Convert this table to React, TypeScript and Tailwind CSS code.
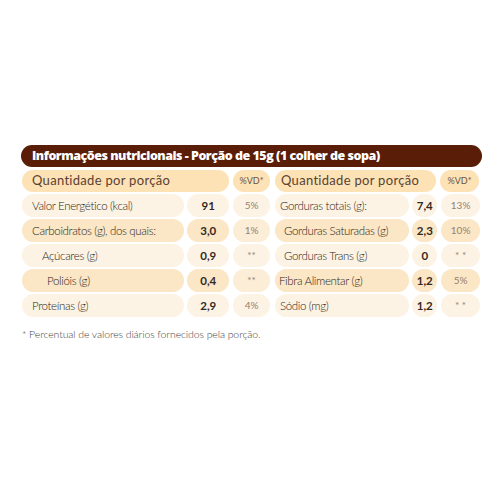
type Row = {
  label: string
  value: string
  vd: string
  dark?: boolean
  indent?: string
}

const left: Row[] = [
  { label: 'Valor Energético (kcal)', value: '91', vd: '5%' },
  { label: 'Carboidratos (g), dos quais:', value: '3,0', vd: '1%', dark: true },
  { label: 'Açúcares (g)', value: '0,9', vd: '**', indent: 'pl-[20px]' },
  { label: 'Polióis (g)', value: '0,4', vd: '**', dark: true, indent: 'pl-[25px]' },
  { label: 'Proteínas (g)', value: '2,9', vd: '4%' },
]

const right: Row[] = [
  { label: 'Gorduras totais (g):', value: '7,4', vd: '13%', indent: 'pl-[5px]' },
  { label: 'Gorduras Saturadas (g)', value: '2,3', vd: '10%', dark: true, indent: 'pl-[9px]' },
  { label: 'Gorduras Trans (g)', value: '0', vd: '* *', indent: 'pl-[9px]' },
  { label: 'Fibra Alimentar (g)', value: '1,2', vd: '5%', dark: true, indent: 'pl-[4px]' },
  { label: 'Sódio (mg)', value: '1,2', vd: '* *', indent: 'pl-[5px]' },
]

const font = { fontFamily: 'Lato, "Noto Sans", sans-serif' }

function Cells({ row, labelW, valueW, vdW, leftSide }: { row: Row; labelW: string; valueW: string; vdW: string; leftSide: boolean }) {
  const bg = row.dark ? 'bg-[#fbe6c5]' : 'bg-[#fdf3e4]'
  const vdBg = row.dark ? (leftSide ? 'bg-[#fcedd6]' : 'bg-[#fbe6c5]') : 'bg-[#fdf3e4]'
  return (
    <>
      <div className={`${labelW} ${bg} ${row.indent ?? 'pl-[10px]'} flex h-[23px] items-center rounded-full text-[11.5px] font-light tracking-[-0.35px] text-[#2a1f18]`}>
        {row.label}
      </div>
      <div className={`${valueW} ${bg} flex h-[23px] items-center justify-center rounded-full text-[11.5px] font-bold text-[#34281f]`}>
        {row.value}
      </div>
      <div className={`${vdW} ${vdBg} flex h-[23px] items-center justify-center rounded-full text-[10px] text-[#948171]`}>
        {row.vd}
      </div>
    </>
  )
}

export default function App() {
  return (
    <div className="h-[500px] w-[500px] bg-white pl-[21px] pt-[145px]" style={font}>
      <div className="flex w-[461px] flex-col">
        <div className="flex h-[22px] items-center rounded-full bg-[#5a1d08] pl-[11px]">
          <span
            className="text-[12.5px] font-extrabold tracking-[-0.5px] text-white"
            style={{ fontFamily: '"Open Sans", Lato, sans-serif' }}
          >
            Informações nutricionais - Porção de 15g (1 colher de sopa)
          </span>
        </div>

        <div className="mt-[3px] flex gap-[5px] pl-[1px]">
          <div className="flex w-[248px] flex-col gap-[2px]">
            <div className="flex gap-[4px]">
              <div className="flex h-[22px] w-[207px] items-center rounded-full bg-[#fde2b6] pl-[10px] text-[13px] tracking-[0.3px] text-[#5a4131]">
                Quantidade por porção
              </div>
              <div className="flex h-[22px] w-[37px] items-center justify-center rounded-full bg-[#fde2b6] text-[9px] text-[#6b5242]">
                %VD*
              </div>
            </div>
            {left.map((r) => (
              <div key={r.label} className="flex gap-[3px]">
                <Cells row={r} labelW="w-[163px]" valueW="w-[42px]" vdW="ml-[1px] w-[37px]" leftSide />
              </div>
            ))}
          </div>

          <div className="flex w-[205px] flex-col gap-[2px]">
            <div className="flex gap-[4px]">
              <div className="flex h-[22px] w-[161px] items-center rounded-full bg-[#fde2b6] pl-[6px] text-[13px] tracking-[0.3px] text-[#5a4131]">
                Quantidade por porção
              </div>
              <div className="flex h-[22px] w-[39px] items-center justify-center rounded-full bg-[#fde2b6] text-[9px] text-[#6b5242]">
                %VD*
              </div>
            </div>
            {right.map((r) => (
              <div key={r.label} className="flex gap-[3px]">
                <Cells row={r} labelW="w-[135px]" valueW="w-[25px]" vdW="ml-[1px] w-[39px]" leftSide={false} />
              </div>
            ))}
          </div>
        </div>

        <p className="mt-[10px] pl-[1px] text-[10.5px] font-light tracking-[-0.1px] text-[#3f3f3f]">
          * Percentual de valores diários fornecidos pela porção.
        </p>
      </div>
    </div>
  )
}
